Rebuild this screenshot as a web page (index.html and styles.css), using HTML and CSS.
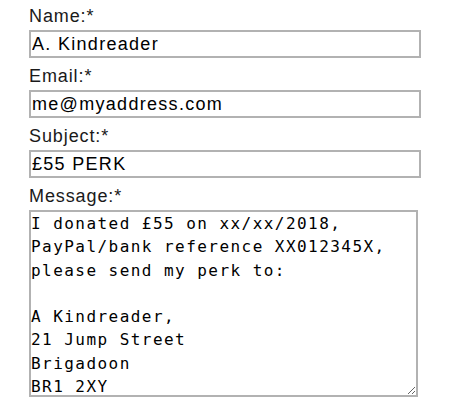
FILE: index.html
```html
<!DOCTYPE html>
<html>
<head>
<meta charset="utf-8">
<link rel="stylesheet" href="styles.css">
</head>
<body>
<form class="form">
  <div class="field">
    <label class="label" for="name">Name:*</label>
    <input class="input" id="name" type="text" value="A. Kindreader">
  </div>
  <div class="field">
    <label class="label" for="email">Email:*</label>
    <input class="input" id="email" type="text" value="me@myaddress.com">
  </div>
  <div class="field">
    <label class="label" for="subject">Subject:*</label>
    <input class="input" id="subject" type="text" value="£55 PERK">
  </div>
  <div class="field">
    <label class="label" for="message">Message:*</label>
    <textarea class="textarea" id="message">I donated £55 on xx/xx/2018,
PayPal/bank reference XX012345X,
please send my perk to:

A Kindreader,
21 Jump Street
Brigadoon
BR1 2XY</textarea>
  </div>
</form>
</body>
</html>
```
FILE: styles.css
```css
html, body {
  margin: 0;
  padding: 0;
  background: #ffffff;
}

.form {
  padding: 6px 0 0 29px;
  font-family: "Liberation Sans", Arial, sans-serif;
}

.field {
  display: flex;
  flex-direction: column;
  align-items: flex-start;
  margin-bottom: 8px;
}

.label {
  display: block;
  font-size: 18px;
  line-height: 21px;
  letter-spacing: 0.9px;
  color: #1a1a1a;
  margin-bottom: 3px;
}

.input {
  box-sizing: border-box;
  width: 392px;
  height: 28px;
  margin: 0;
  padding: 0 1px;
  border: 2px solid #b2b2b2;
  border-radius: 0;
  outline: none;
  background: #ffffff;
  font-family: "Liberation Sans", Arial, sans-serif;
  font-size: 18px;
  line-height: 24px;
  letter-spacing: 1.3px;
  color: #000000;
}

.textarea {
  box-sizing: border-box;
  width: 389px;
  height: 187px;
  margin: 0;
  padding: 0 0 0 0;
  border: 2px solid #b2b2b2;
  border-radius: 0;
  outline: none;
  background: #ffffff;
  font-family: "DejaVu Sans Mono", "Liberation Mono", monospace;
  font-size: 16px;
  line-height: 23.3px;
  letter-spacing: 1.45px;
  color: #000000;
  overflow: hidden;
  resize: both;
}
```
